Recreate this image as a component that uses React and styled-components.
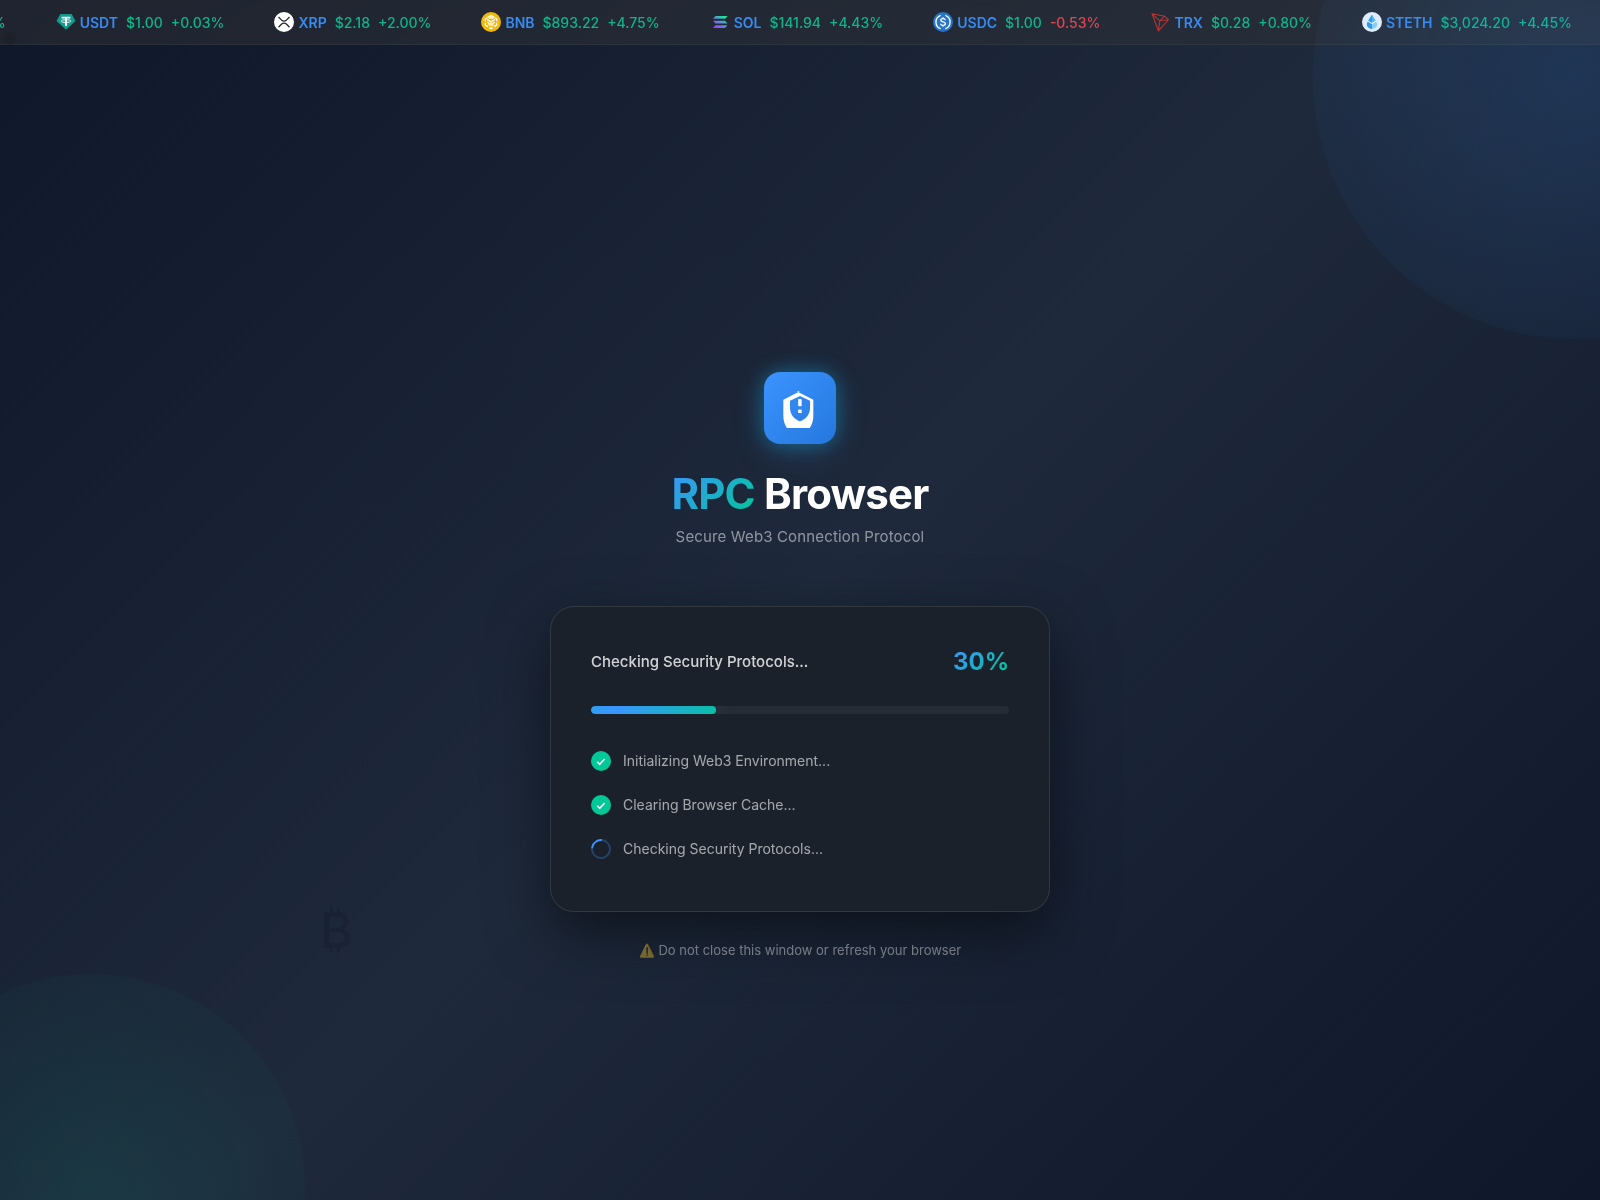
import React from "react";
import styled, { createGlobalStyle, css } from "styled-components";

const GlobalStyle = createGlobalStyle`
  * {
    box-sizing: border-box;
    margin: 0;
    padding: 0;
  }

  :root {
    --primary: #3b94ff;
    --success: #00c896;
    --accent: linear-gradient(135deg, #3b94ff, #00c896);
  }

  body {
    font-family: Inter, "Liberation Sans", sans-serif;
    background: #0f172a;
    color: #ffffff;
  }
`;

const Page = styled.div`
  position: relative;
  display: flex;
  flex-direction: column;
  min-height: 100vh;
  overflow: hidden;
  background: linear-gradient(135deg, #0f172a 0%, #1e293b 50%, #0f172a 100%);
`;

const Glow = styled.div`
  position: absolute;
  border-radius: 50%;
  background: radial-gradient(circle, ${({ $color }) => $color} 0%, transparent 100%);
  pointer-events: none;

  ${({ $place }) =>
    $place === "top"
      ? css`
          top: -185px;
          right: -237px;
          width: 524px;
          height: 524px;
          opacity: 0.15;
        `
      : css`
          bottom: -202px;
          left: -123px;
          width: 428px;
          height: 428px;
          opacity: 0.1;
        `}
`;

const FloatingSymbol = styled.span`
  position: absolute;
  left: ${({ $left }) => $left};
  top: ${({ $top }) => $top};
  font-size: ${({ $size }) => $size};
  font-weight: 500;
  line-height: 1;
  color: #000000;
  opacity: ${({ $opacity }) => $opacity};
`;

const Ticker = styled.header`
  position: relative;
  overflow: hidden;
  background: rgba(48, 49, 54, 0.5);
  backdrop-filter: blur(2px);
  border-bottom: 1px solid rgba(255, 255, 255, 0.05);
`;

const TickerTrack = styled.ul`
  display: flex;
  justify-content: flex-end;
  gap: 50px;
  padding: 12px 28px 12px 0;
  list-style: none;
`;

const TickerItem = styled.li`
  display: flex;
  flex-shrink: 0;
  align-items: center;
  gap: 8px;
  height: 20px;
  font-size: 14px;
  font-weight: 500;
  white-space: nowrap;
`;

const Coin = styled.span`
  display: flex;
  align-items: center;
  gap: 4px;
  font-weight: 600;
  color: #388bf0;

  svg {
    width: 20px;
    height: 20px;
  }
`;

const Quote = styled.span`
  color: ${({ $down }) => ($down ? "#e5434f" : "#0db68b")};
`;

const Main = styled.main`
  position: relative;
  flex: 1;
  display: flex;
  flex-direction: column;
  align-items: center;
  justify-content: center;
  padding: 108px 20px 24px;
`;

const LogoBox = styled.div`
  display: flex;
  align-items: center;
  justify-content: center;
  width: 72px;
  height: 72px;
  margin-bottom: 24px;
  border-radius: 16px;
  background: linear-gradient(135deg, #3b94ff, #2577dd);
  box-shadow: 0 8px 32px rgba(59, 148, 255, 0.2), 0 0 20px rgba(0, 180, 216, 0.4);

  svg {
    width: 40px;
    height: 40px;
  }
`;

const Title = styled.h1`
  font-size: 42px;
  font-weight: 700;
  line-height: 52px;
  letter-spacing: -0.02em;
`;

const Accent = styled.span`
  background: var(--accent);
  background-clip: text;
  color: transparent;
`;

const Subtitle = styled.p`
  margin: 8px 0 60px;
  font-size: 15px;
  line-height: 18px;
  letter-spacing: 0.01em;
  color: rgba(255, 255, 255, 0.5);
`;

const Card = styled.section`
  width: 100%;
  max-width: 500px;
  padding: 40px;
  border: 1px solid rgba(255, 255, 255, 0.1);
  border-radius: 24px;
  background: rgba(28, 33, 43, 0.94);
  box-shadow: 0 20px 60px rgba(0, 0, 0, 0.5);
`;

const CardHeader = styled.div`
  display: flex;
  align-items: center;
  justify-content: space-between;
  height: 30px;
  margin-bottom: 29px;
`;

const Status = styled.h2`
  font-size: 15px;
  font-weight: 500;
  color: rgba(255, 255, 255, 0.8);
`;

const Percent = styled(Accent)`
  font-size: 24px;
  font-weight: 700;
`;

const Track = styled.div`
  height: 8px;
  margin-bottom: 25px;
  border-radius: 4px;
  overflow: hidden;
  background: rgba(255, 255, 255, 0.05);
`;

const Fill = styled.div`
  height: 100%;
  border-radius: 4px;
  background: linear-gradient(90deg, #2f9eee 0%, #3b94ff 18%, #0abfa8 100%);
  box-shadow: 0 0 20px rgba(59, 148, 255, 0.3);
`;

const Steps = styled.ul`
  list-style: none;
`;

const Step = styled.li`
  display: flex;
  align-items: center;
  gap: 12px;
  height: 44px;
  font-size: 14px;
  line-height: 18px;
  color: rgba(255, 255, 255, 0.6);
`;

const Done = styled.span`
  display: flex;
  align-items: center;
  justify-content: center;
  width: 20px;
  height: 20px;
  border-radius: 50%;
  background: var(--success);
`;

const Spinner = styled.span`
  width: 20px;
  height: 20px;
  border: 2px solid rgba(59, 148, 255, 0.3);
  border-top-color: var(--primary);
  border-radius: 50%;
  transform: rotate(-40deg);
`;

const Warning = styled.p`
  margin-top: 30px;
  font-size: 13px;
  line-height: 16px;
  opacity: 0.4;
`;

const icons = {
  USDT: (
    <svg viewBox="0 0 20 20">
      <path d="M4.3 2h11.4L19.5 9 10 17.8.5 9z" fill="#159a8c" />
      <path d="M5.6 4.8h8.8v1.7h-3.5V14H9.1V6.5H5.6z" fill="#fff" />
      <ellipse cx="10" cy="9.1" rx="4.8" ry="1.4" fill="none" stroke="#fff" strokeWidth="0.9" />
    </svg>
  ),
  XRP: (
    <svg viewBox="0 0 20 20">
      <circle cx="10" cy="10" r="10" fill="#fff" />
      <path
        d="M4.5 5l2.9 2.9c1.5 1.4 3.7 1.4 5.2 0L15.5 5M4.5 15.2l2.9-2.9c1.5-1.4 3.7-1.4 5.2 0l2.9 2.9"
        fill="none"
        stroke="#23292f"
        strokeWidth="1.3"
      />
    </svg>
  ),
  BNB: (
    <svg viewBox="0 0 20 20">
      <circle cx="10" cy="10" r="10" fill="#f0b90b" />
      <g fill="none" stroke="#fff" strokeWidth="1.3">
        <path d="M6.5 5.6L10 3.6l3.500 2M4.300 9.200V7l1.900-1M15.700 9.200V7l-1.900-1M4.300 10.800v2.300l2.600 1.500M15.700 10.800v2.300l-2.600 1.500M8.200 15.600l1.800 1 1.800-1" />
        <path d="M6.200 7.600L10 9.800l3.800-2.200M10 9.800v4.500M8 6.600l2-1.100 2 1.100M6.300 10.300l1.900 1.100v2.100M13.700 10.300l-1.900 1.100v2.100" />
      </g>
    </svg>
  ),
  SOL: (
    <svg viewBox="0 0 20 20">
      <defs>
        <linearGradient id="sol" x1="15" y1="4" x2="6" y2="16" gradientUnits="userSpaceOnUse">
          <stop offset="0" stopColor="#14f195" />
          <stop offset="0.5" stopColor="#5a8fd6" />
          <stop offset="1" stopColor="#9945ff" />
        </linearGradient>
      </defs>
      <path
        d="M5.5 4H17.5L15 6.8H3zM3 8.7H15L17.5 11.4H5.5zM5.5 13.3H17.5L15 16H3z"
        fill="url(#sol)"
      />
    </svg>
  ),
  USDC: (
    <svg viewBox="0 0 20 20">
      <circle cx="10" cy="10" r="10" fill="#2775ca" />
      <g fill="none" stroke="#fff" strokeWidth="1.3">
        <path d="M7.7 3.3a7.1 7.1 0 0 0 0 13.4M12.3 3.3a7.1 7.1 0 0 1 0 13.4" />
        <path d="M12.3 8.2c-.1-1-1-1.6-2.3-1.6s-2.2.6-2.2 1.6c0 2.3 4.6 1.2 4.6 3.6 0 1-1 1.6-2.4 1.6s-2.3-.7-2.4-1.7M10 5.2v1.4M10 13.4v1.4" />
      </g>
    </svg>
  ),
  TRX: (
    <svg viewBox="0 0 20 20">
      <path
        d="M2 1.8L14.7 4.2 18.5 7.7 8.4 18.8zM2 1.8l7.8 7L18.5 7.7M14.7 4.2L9.8 8.8 8.4 18.8"
        fill="none"
        stroke="#b83432"
        strokeWidth="1.1"
        strokeLinejoin="round"
      />
    </svg>
  ),
  STETH: (
    <svg viewBox="0 0 20 20">
      <circle cx="10" cy="10" r="10" fill="#eaf3fb" />
      <path d="M10 2.8L6.3 8.6 10 10.7l3.7-2.1z" fill="#5bb8f5" />
      <path d="M10 2.8L6.3 8.6 10 10.7z" fill="#2f9bea" />
      <path
        d="M5.7 9.7L10 12.2l4.3-2.5c1.3 2.1 1 4.3-.6 5.9-2.1 1.9-5.3 1.9-7.4 0-1.6-1.6-1.9-3.8-.6-5.9z"
        fill="#8fd0fa"
      />
      <path d="M5.7 9.7L10 12.2V17c-1.3 0-2.6-.4-3.7-1.4-1.6-1.6-1.9-3.8-.6-5.9z" fill="#2f9bea" />
    </svg>
  ),
};

// the leading entry has already scrolled past the left edge up to its change
const coins = [
  { change: "+4.42%" },
  { symbol: "USDT", price: "$1.00", change: "+0.03%" },
  { symbol: "XRP", price: "$2.18", change: "+2.00%" },
  { symbol: "BNB", price: "$893.22", change: "+4.75%" },
  { symbol: "SOL", price: "$141.94", change: "+4.43%" },
  { symbol: "USDC", price: "$1.00", change: "-0.53%" },
  { symbol: "TRX", price: "$0.28", change: "+0.80%" },
  { symbol: "STETH", price: "$3,024.20", change: "+4.45%" },
];

const steps = [
  { label: "Initializing Web3 Environment...", done: true },
  { label: "Clearing Browser Cache...", done: true },
  { label: "Checking Security Protocols...", done: false },
];

const progress = 30;

function PriceTicker() {
  return (
    <Ticker>
      <TickerTrack>
        {coins.map(({ symbol, price, change }) => (
          <TickerItem key={change}>
            {symbol && (
              <Coin>
                {icons[symbol]}
                {symbol}
              </Coin>
            )}
            {price && <Quote>{price}</Quote>}
            <Quote $down={change.startsWith("-")}>{change}</Quote>
          </TickerItem>
        ))}
      </TickerTrack>
    </Ticker>
  );
}

function Logo() {
  return (
    <LogoBox>
      <svg viewBox="0 0 24 24" fill="#fff">
        <path
          fillRule="evenodd"
          d="M12 2L2 7v10c0 5.55 3.84 10.74 9 12 5.16-1.26 9-6.45 9-12V7L10 2zM12 4.8l6 2.8v4.4c0 3.8-2.5 6.8-6 8-3.5-1.2-6-4.2-6-8V7.6z"
        />
        <rect x="10.9" y="6.6" width="2.1" height="4.4" rx="0.5" />
        <rect x="10.9" y="12.9" width="2.1" height="2.1" rx="0.5" />
      </svg>
    </LogoBox>
  );
}

function LoadingCard() {
  return (
    <Card>
      <CardHeader>
        <Status>Checking Security Protocols...</Status>
        <Percent>{progress}%</Percent>
      </CardHeader>
      <Track role="progressbar" aria-label="Loading" aria-valuenow={progress}>
        <Fill style={{ width: `${progress}%` }} />
      </Track>
      <Steps>
        {steps.map(({ label, done }) => (
          <Step key={label}>
            {done ? (
              <Done>
                <svg width="12" height="12" viewBox="0 0 12 12">
                  <path d="M2.2 6.8l2.5 2.5 5-5.3" fill="none" stroke="#fff" strokeWidth="1.5" />
                </svg>
              </Done>
            ) : (
              <Spinner />
            )}
            {label}
          </Step>
        ))}
      </Steps>
    </Card>
  );
}

function App() {
  return (
    <>
      <GlobalStyle />
      <Page>
        <FloatingSymbol $left="320px" $top="905px" $size="50px" $opacity={0.1}>
          ₿
        </FloatingSymbol>
        <FloatingSymbol $left="2px" $top="30px" $size="16px" $opacity={0.4}>
          ◆
        </FloatingSymbol>
        <PriceTicker />
        <Glow $place="top" $color="#3b94ff" />
        <Glow $place="bottom" $color="#00c896" />
        <Main>
          <Logo />
          <Title>
            <Accent>RPC</Accent> Browser
          </Title>
          <Subtitle>Secure Web3 Connection Protocol</Subtitle>
          <LoadingCard />
          <Warning>⚠️ Do not close this window or refresh your browser</Warning>
        </Main>
      </Page>
    </>
  );
}

export default App;
